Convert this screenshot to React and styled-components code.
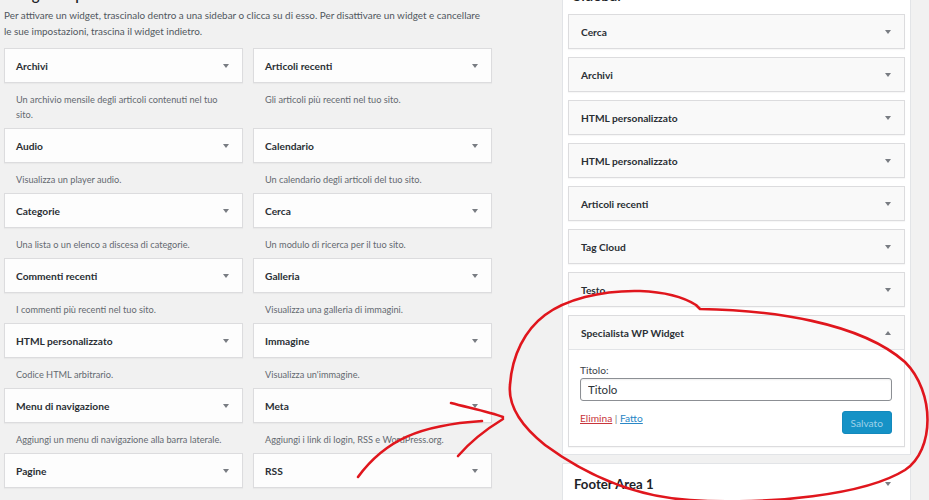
import React from "react";
import styled, { createGlobalStyle } from "styled-components";

const FONT = `Lato, "Open Sans", "Noto Sans", sans-serif`;

const GlobalStyle = createGlobalStyle`
  html, body { margin: 0; padding: 0; background: #f1f1f1; overflow: hidden; }
  body { font-family: ${FONT}; color: #3c434a; }
  * { box-sizing: border-box; }
`;

const Page = styled.div`
  position: relative;
  width: 929px;
  height: 500px;
  overflow: hidden;
`;

const Columns = styled.div`
  display: flex;
  align-items: flex-start;
  margin-top: -16px;
  padding-left: 4px;
`;

const LeftCol = styled.section`
  flex: none;
  width: 487px;
`;

const RightCol = styled.aside`
  flex: none;
  width: 349px;
  margin-left: 71px;
  display: flex;
  flex-direction: column;
  gap: 8px;
`;

const AreaTitle = styled.h2`
  margin: 0;
  font-size: 15px;
  line-height: 20px;
  font-weight: 600;
  color: #1d2327;
`;

const Intro = styled.p`
  margin: 3px 0 0;
  padding-right: 5px;
  font-size: 9.9px;
  line-height: 16px;
  color: #50575e;
`;

const Grid = styled.div`
  display: grid;
  grid-template-columns: 239px 239px;
  column-gap: 10px;
  margin-top: 9px;
  align-items: start;
`;

const Card = styled.div`
  background: ${(p) => (p.$inPanel ? "#f9f9f9" : "#fdfdfd")};
  border: 1px solid #dcdcde;
  box-shadow: 0 1px 1px rgba(0, 0, 0, 0.03);
`;

const CardHead = styled.div`
  display: flex;
  align-items: center;
  justify-content: space-between;
  height: ${(p) => (p.$open ? "34px" : "33px")};
  padding: 0 13px 0 ${(p) => (p.$inPanel ? "12px" : "11px")};
  border-bottom: ${(p) => (p.$open ? "1px solid #e2e4e7" : "none")};
`;

const CardTitle = styled.h3`
  margin: 0;
  font-size: 10.2px;
  line-height: 14px;
  font-weight: 700;
  color: #2a2f34;
`;

const Caret = styled.span`
  width: 0;
  height: 0;
  border-left: 3px solid transparent;
  border-right: 3px solid transparent;
  ${(p) =>
    p.$up
      ? "border-bottom: 4px solid #787c82;"
      : "border-top: 4px solid #787c82;"}
`;

const Desc = styled.p`
  margin: 9px 0 6px;
  padding: 0 12px;
  font-size: 9.2px;
  line-height: 15px;
  color: #646970;
`;

const Panel = styled.div`
  background: #fff;
  border: 1px solid #e2e4e7;
  padding: 0 5px 7px;
`;

const PanelTitle = styled.h2`
  margin: 0 0 0 5px;
  font-size: 15px;
  line-height: 20px;
  font-weight: 600;
  color: #1d2327;
`;

const WidgetList = styled.div`
  display: flex;
  flex-direction: column;
  gap: 8px;
  margin-top: 9px;
`;

const Body = styled.div`
  background: #fff;
  padding: 13px 12px 12px 11px;
`;

const Label = styled.label`
  display: block;
  font-size: 10.2px;
  line-height: 15px;
  color: #3c434a;
`;

const TextInput = styled.input`
  display: block;
  width: 100%;
  height: 23px;
  margin: 0;
  padding: 0 7px;
  border: 1px solid #8c8f94;
  border-radius: 3px;
  box-shadow: inset 0 1px 2px rgba(0, 0, 0, 0.07);
  font-family: ${FONT};
  font-size: 11.5px;
  color: #2c3338;
  background: #fff;
  outline: none;
`;

const Actions = styled.div`
  display: flex;
  justify-content: space-between;
  align-items: flex-start;
  margin-top: 10px;
`;

const Links = styled.div`
  font-size: 10.2px;
  line-height: 15px;
  color: #787c82;
`;

const ActionLink = styled.a`
  color: ${(p) => (p.$danger ? "#c8353b" : "#2a87c6")};
  text-decoration: underline;
`;

const SaveButton = styled.button`
  height: 23px;
  padding: 0 8px;
  border: 1px solid #1389bd;
  border-radius: 3px;
  background: #1592c6;
  color: #9dd1e9;
  font-family: ${FONT};
  font-size: 10.2px;
  cursor: default;
`;

const FooterPanel = styled.div`
  display: flex;
  justify-content: space-between;
  background: #fff;
  border: 1px solid #e2e4e7;
  padding: 11px 19px 40px 11px;
`;

const FooterTitle = styled.h2`
  margin: 0;
  font-size: 13.2px;
  line-height: 18px;
  font-weight: 700;
  color: #1d2327;
`;

const FooterCaret = styled(Caret)`
  margin-top: 7px;
`;

const Annotation = styled.svg`
  position: absolute;
  left: 0;
  top: 0;
  width: 929px;
  height: 500px;
  pointer-events: none;
`;

const available = [
  ["Archivi", "Un archivio mensile degli articoli contenuti nel tuo sito."],
  ["Articoli recenti", "Gli articoli più recenti nel tuo sito."],
  ["Audio", "Visualizza un player audio."],
  ["Calendario", "Un calendario degli articoli del tuo sito."],
  ["Categorie", "Una lista o un elenco a discesa di categorie."],
  ["Cerca", "Un modulo di ricerca per il tuo sito."],
  ["Commenti recenti", "I commenti più recenti nel tuo sito."],
  ["Galleria", "Visualizza una galleria di immagini."],
  ["HTML personalizzato", "Codice HTML arbitrario."],
  ["Immagine", "Visualizza un'immagine."],
  ["Menu di navigazione", "Aggiungi un menu di navigazione alla barra laterale."],
  ["Meta", "Aggiungi i link di login, RSS e WordPress.org."],
  ["Pagine", "La lista delle pagine del tuo sito."],
  ["RSS", "Contenuti da un qualsiasi feed RSS o Atom."],
];

const sidebarWidgets = [
  "Cerca",
  "Archivi",
  "HTML personalizzato",
  "HTML personalizzato",
  "Articoli recenti",
  "Tag Cloud",
  "Testo",
];

export default function App() {
  return (
    <Page>
      <GlobalStyle />
      <Columns>
        <LeftCol>
          <AreaTitle>Widget disponibili</AreaTitle>
          <Intro>
            Per attivare un widget, trascinalo dentro a una sidebar o clicca su di esso. Per
            disattivare un widget e cancellare le sue impostazioni, trascina il widget indietro.
          </Intro>
          <Grid>
            {available.map(([title, desc]) => (
              <div key={title}>
                <Card>
                  <CardHead>
                    <CardTitle>{title}</CardTitle>
                    <Caret />
                  </CardHead>
                </Card>
                <Desc>{desc}</Desc>
              </div>
            ))}
          </Grid>
        </LeftCol>

        <RightCol>
          <Panel>
            <PanelTitle>Sidebar</PanelTitle>
            <WidgetList>
              {sidebarWidgets.map((title, i) => (
                <Card $inPanel key={i}>
                  <CardHead $inPanel>
                    <CardTitle>{title}</CardTitle>
                    <Caret />
                  </CardHead>
                </Card>
              ))}
              <Card $inPanel>
                <CardHead $inPanel $open>
                  <CardTitle>Specialista WP Widget</CardTitle>
                  <Caret $up />
                </CardHead>
                <Body>
                  <Label htmlFor="titolo">Titolo:</Label>
                  <TextInput id="titolo" defaultValue="Titolo" readOnly />
                  <Actions>
                    <Links>
                      <ActionLink $danger>Elimina</ActionLink> | <ActionLink>Fatto</ActionLink>
                    </Links>
                    <SaveButton>Salvato</SaveButton>
                  </Actions>
                </Body>
              </Card>
            </WidgetList>
          </Panel>
          <FooterPanel>
            <FooterTitle>Footer Area 1</FooterTitle>
            <FooterCaret />
          </FooterPanel>
        </RightCol>
      </Columns>

      <Annotation viewBox="0 0 929 500">
        <g fill="none" stroke="#e0161d" strokeWidth="2.6" strokeLinecap="round" strokeLinejoin="round">
          <path d="M 545 445 C 520 425, 508 405, 510 385 C 512 355, 525 330, 545 315 C 565 300, 600 290, 640 291 C 665 292, 685 298, 696 305 L 700 309 C 770 310, 860 322, 905 362 C 935 392, 935 450, 905 470 C 865 495, 770 505, 690 500 C 640 497, 590 478, 545 445" />
          <path d="M 358 477 C 385 440, 420 425, 482 421" />
          <path d="M 451 403 C 470 408, 490 412, 503 417" />
          <path d="M 503 419 C 485 430, 470 442, 458 456" />
        </g>
      </Annotation>
    </Page>
  );
}
